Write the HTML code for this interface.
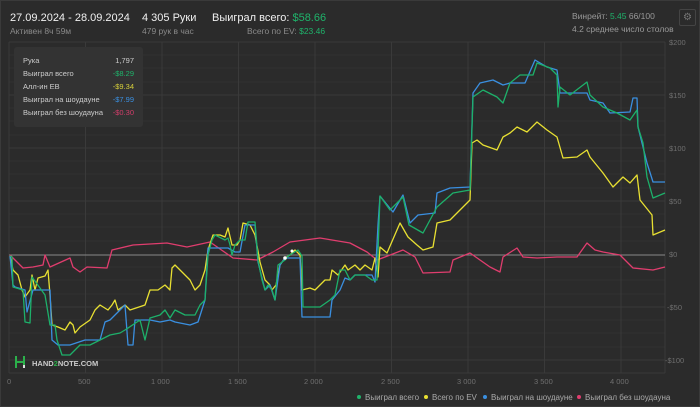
<!DOCTYPE html>
<html><head><meta charset="utf-8"><style>
body{margin:0;width:700px;height:407px;background:#2b2b2b;font-family:"Liberation Sans",sans-serif;overflow:hidden;position:relative;color:#ddd}
.frame{position:absolute;left:0;top:0;width:698px;height:405px;border:1px solid #3a3a3a}
.t{position:absolute;white-space:nowrap}
.big{font-size:11px;color:#f0f0f0}
.sm{font-size:8.5px;color:#8a8a8a}
.g{color:#1fb36b}
.ax{position:absolute;font-size:7.5px;color:#6f6f6f}
.tip{position:absolute;left:14px;top:47px;width:129px;height:80px;background:#333333;border-radius:3px;font-size:7.5px;color:#ccc}
.tip div{position:absolute;left:9px;right:9px;height:12px}
.tip span{position:absolute;right:0}
.leg{position:absolute;top:393px;font-size:8px;color:#aaa}
.leg i{display:inline-block;width:4px;height:4px;border-radius:2px;margin-right:4px;vertical-align:1px}
</style></head><body>
<div class="frame"></div>
<div class="t big" style="left:10px;top:12px">27.09.2024 - 28.09.2024</div>
<div class="t sm" style="left:10px;top:26px">Активен 8ч 59м</div>
<div class="t big" style="left:142px;top:12px">4 305 Руки</div>
<div class="t sm" style="left:142px;top:26px">479 рук в час</div>
<div class="t big" style="left:212px;top:12px">Выиграл всего: <span class="g">$58.66</span></div>
<div class="t sm" style="left:247px;top:26px">Всего по EV: <span class="g">$23.46</span></div>
<div class="t sm" style="left:572px;top:11px;color:#999">Винрейт: <span class="g">5.45</span> 66/100</div>
<div class="t sm" style="left:572px;top:24px;color:#999">4.2 среднее число столов</div>
<div style="position:absolute;left:679px;top:9px;width:15px;height:15px;border:1px solid #444;border-radius:2px;color:#777;font-size:10px;text-align:center;line-height:15px">⚙</div>
<svg width="700" height="407" style="position:absolute;left:0;top:0">
<g stroke="#323232" stroke-width="1">
<line x1="9" y1="55" x2="665" y2="55"/><line x1="9" y1="68" x2="665" y2="68"/><line x1="9" y1="82" x2="665" y2="82"/>
<line x1="9" y1="108" x2="665" y2="108"/><line x1="9" y1="121" x2="665" y2="121"/><line x1="9" y1="135" x2="665" y2="135"/>
<line x1="9" y1="161" x2="665" y2="161"/><line x1="9" y1="174" x2="665" y2="174"/><line x1="9" y1="188" x2="665" y2="188"/>
<line x1="9" y1="214" x2="665" y2="214"/><line x1="9" y1="227" x2="665" y2="227"/><line x1="9" y1="241" x2="665" y2="241"/>
<line x1="9" y1="267" x2="665" y2="267"/><line x1="9" y1="280" x2="665" y2="280"/><line x1="9" y1="294" x2="665" y2="294"/>
<line x1="9" y1="320" x2="665" y2="320"/><line x1="9" y1="333" x2="665" y2="333"/><line x1="9" y1="347" x2="665" y2="347"/>
</g>
<g stroke="#3a3a3a" stroke-width="1">
<line x1="9" y1="42" x2="665" y2="42"/><line x1="9" y1="95" x2="665" y2="95"/><line x1="9" y1="148" x2="665" y2="148"/>
<line x1="9" y1="201" x2="665" y2="201"/><line x1="9" y1="307" x2="665" y2="307"/><line x1="9" y1="360" x2="665" y2="360"/>
<line x1="9" y1="373" x2="665" y2="373"/>
<line x1="9" y1="42" x2="9" y2="373"/><line x1="85.5" y1="42" x2="85.5" y2="373"/><line x1="162" y1="42" x2="162" y2="373"/>
<line x1="238.5" y1="42" x2="238.5" y2="373"/><line x1="315" y1="42" x2="315" y2="373"/><line x1="391.5" y1="42" x2="391.5" y2="373"/>
<line x1="468" y1="42" x2="468" y2="373"/><line x1="544.5" y1="42" x2="544.5" y2="373"/><line x1="621" y1="42" x2="621" y2="373"/>
<line x1="665" y1="42" x2="665" y2="373"/>
</g>
<line x1="9" y1="255" x2="665" y2="255" stroke="#888" stroke-width="1"/>
<g fill="none" stroke-width="1.3" stroke-linejoin="round">
<polyline stroke="#e03d6e" points="10,255 23,268 33,267 43,265 45,255 50,267 70,258 73,267 80,272 87,267 107,268 112,250 133,245 167,243 187,247 210,242 233,258 257,260 273,252 290,242 320,238 350,243 367,252 377,260 385,257 403,250 415,257 423,273 450,272 453,260 470,253 490,267 500,272 503,257 517,248 523,257 537,258 557,257 577,257 587,243 595,250 603,252 620,255 633,268 653,270 665,267"/>
<polyline stroke="#e8e032" points="10,256 13,270 18,275 22,290 25,297 30,290 32,275 35,290 38,278 45,276 48,270 50,295 52,325 58,327 65,330 70,322 73,325 75,333 80,327 90,320 95,310 100,305 108,310 112,305 115,300 118,310 125,305 130,310 145,305 150,290 158,290 165,285 170,290 172,268 175,265 180,270 185,275 190,280 195,290 200,285 205,270 208,250 213,235 220,235 225,237 228,228 232,245 237,245 240,240 243,223 250,225 255,235 260,262 265,280 270,285 272,290 276,285 280,265 285,258 290,255 295,250 300,255 302,290 310,288 315,290 320,285 325,280 330,280 332,270 338,275 345,265 348,270 355,265 360,270 365,265 372,270 375,258 378,277 380,247 387,253 400,223 408,237 417,245 423,250 433,247 437,223 450,220 460,210 470,200 472,143 477,140 483,145 497,150 503,137 510,133 517,127 527,132 537,122 547,130 557,137 563,158 577,157 587,150 590,157 603,173 613,187 623,177 630,183 637,175 640,200 652,215 653,235 665,230"/>
<polyline stroke="#3a8fe0" points="10,256 13,285 15,287 25,290 27,312 33,290 50,290 52,340 58,345 70,345 85,340 100,340 105,322 110,320 120,310 125,305 128,345 133,345 135,320 150,320 160,322 170,320 175,322 190,325 198,322 205,300 208,248 228,248 235,252 240,252 245,225 255,225 258,262 265,290 270,285 275,300 280,265 285,258 300,258 302,317 330,317 332,300 340,290 345,278 350,280 355,275 372,275 375,282 378,225 380,196 393,212 403,195 410,223 418,215 435,213 437,193 450,188 470,187 473,93 480,83 493,80 503,85 510,83 525,83 535,60 547,67 557,70 560,93 587,93 590,100 603,103 610,113 630,112 633,98 637,98 638,127 647,163 653,182 665,182"/>
<polyline stroke="#1db06a" points="10,256 12,257 13,287 23,290 25,322 30,323 32,277 45,295 50,325 55,325 57,340 62,355 70,355 80,345 90,345 100,340 110,335 120,333 125,330 140,320 145,340 150,318 160,315 165,310 170,318 175,310 185,315 195,315 200,305 205,300 208,255 212,240 215,235 225,240 228,238 230,245 232,255 235,245 240,240 245,240 248,222 255,222 258,260 262,280 265,290 268,285 272,290 275,300 278,265 285,260 288,256 293,253 298,250 302,256 303,307 320,307 330,300 335,295 340,270 345,270 350,280 355,275 365,275 372,280 377,280 380,196 390,210 403,197 409,225 423,233 437,207 453,193 470,190 473,97 483,90 497,97 503,103 510,83 520,75 533,75 537,63 550,68 557,75 558,107 560,87 570,95 587,82 590,95 603,107 617,113 630,120 637,110 638,127 643,143 647,177 653,198 665,193"/>
</g>
<circle cx="285" cy="258" r="1.8" fill="#fff"/><circle cx="292" cy="251" r="1.5" fill="#fff"/>
</svg>
<div class="ax" style="left:669px;top:38px">$200</div>
<div class="ax" style="left:669px;top:91px">$150</div>
<div class="ax" style="left:669px;top:144px">$100</div>
<div class="ax" style="left:669px;top:197px">$50</div>
<div class="ax" style="left:669px;top:250px">$0</div>
<div class="ax" style="left:667px;top:303px">-$50</div>
<div class="ax" style="left:665px;top:356px">-$100</div>
<div class="ax" style="left:7px;top:377px">0</div>
<div class="ax" style="left:78px;top:377px">500</div>
<div class="ax" style="left:151px;top:377px">1 000</div>
<div class="ax" style="left:228px;top:377px">1 500</div>
<div class="ax" style="left:304px;top:377px">2 000</div>
<div class="ax" style="left:381px;top:377px">2 500</div>
<div class="ax" style="left:457px;top:377px">3 000</div>
<div class="ax" style="left:534px;top:377px">3 500</div>
<div class="ax" style="left:610px;top:377px">4 000</div>
<div style="position:absolute;left:14px;top:355px;width:12px;height:14px">
<svg width="12" height="14"><path d="M2 1V13M10 1V13M2 7H10" stroke="#2bb04a" stroke-width="2" fill="none"/><path d="M10 10V13" stroke="#ddd" stroke-width="2"/></svg></div>
<div class="t" style="left:32px;top:359px;font-size:7.5px;font-weight:bold;color:#ccc">HAND<span style="color:#2bb04a">2</span>NOTE.COM</div>
<div class="tip">
<div style="top:9px">Рука<span>1,797</span></div>
<div style="top:22px">Выиграл всего<span style="color:#1fb36b">-$8.29</span></div>
<div style="top:35px">Алл-ин EB<span style="color:#d6cf3a">-$9.34</span></div>
<div style="top:48px">Выиграл на шоудауне<span style="color:#3a8fe0">-$7.99</span></div>
<div style="top:61px">Выиграл без шоудауна<span style="color:#d23d6a">-$0.30</span></div>
</div>
<div class="leg" style="left:357px"><i style="background:#1fb36b"></i>Выиграл всего</div>
<div class="leg" style="left:424px"><i style="background:#e8e032"></i>Всего по EV</div>
<div class="leg" style="left:483px"><i style="background:#3a8fe0"></i>Выиграл на шоудауне</div>
<div class="leg" style="left:577px"><i style="background:#e03d6e"></i>Выиграл без шоудауна</div>
</body></html>
